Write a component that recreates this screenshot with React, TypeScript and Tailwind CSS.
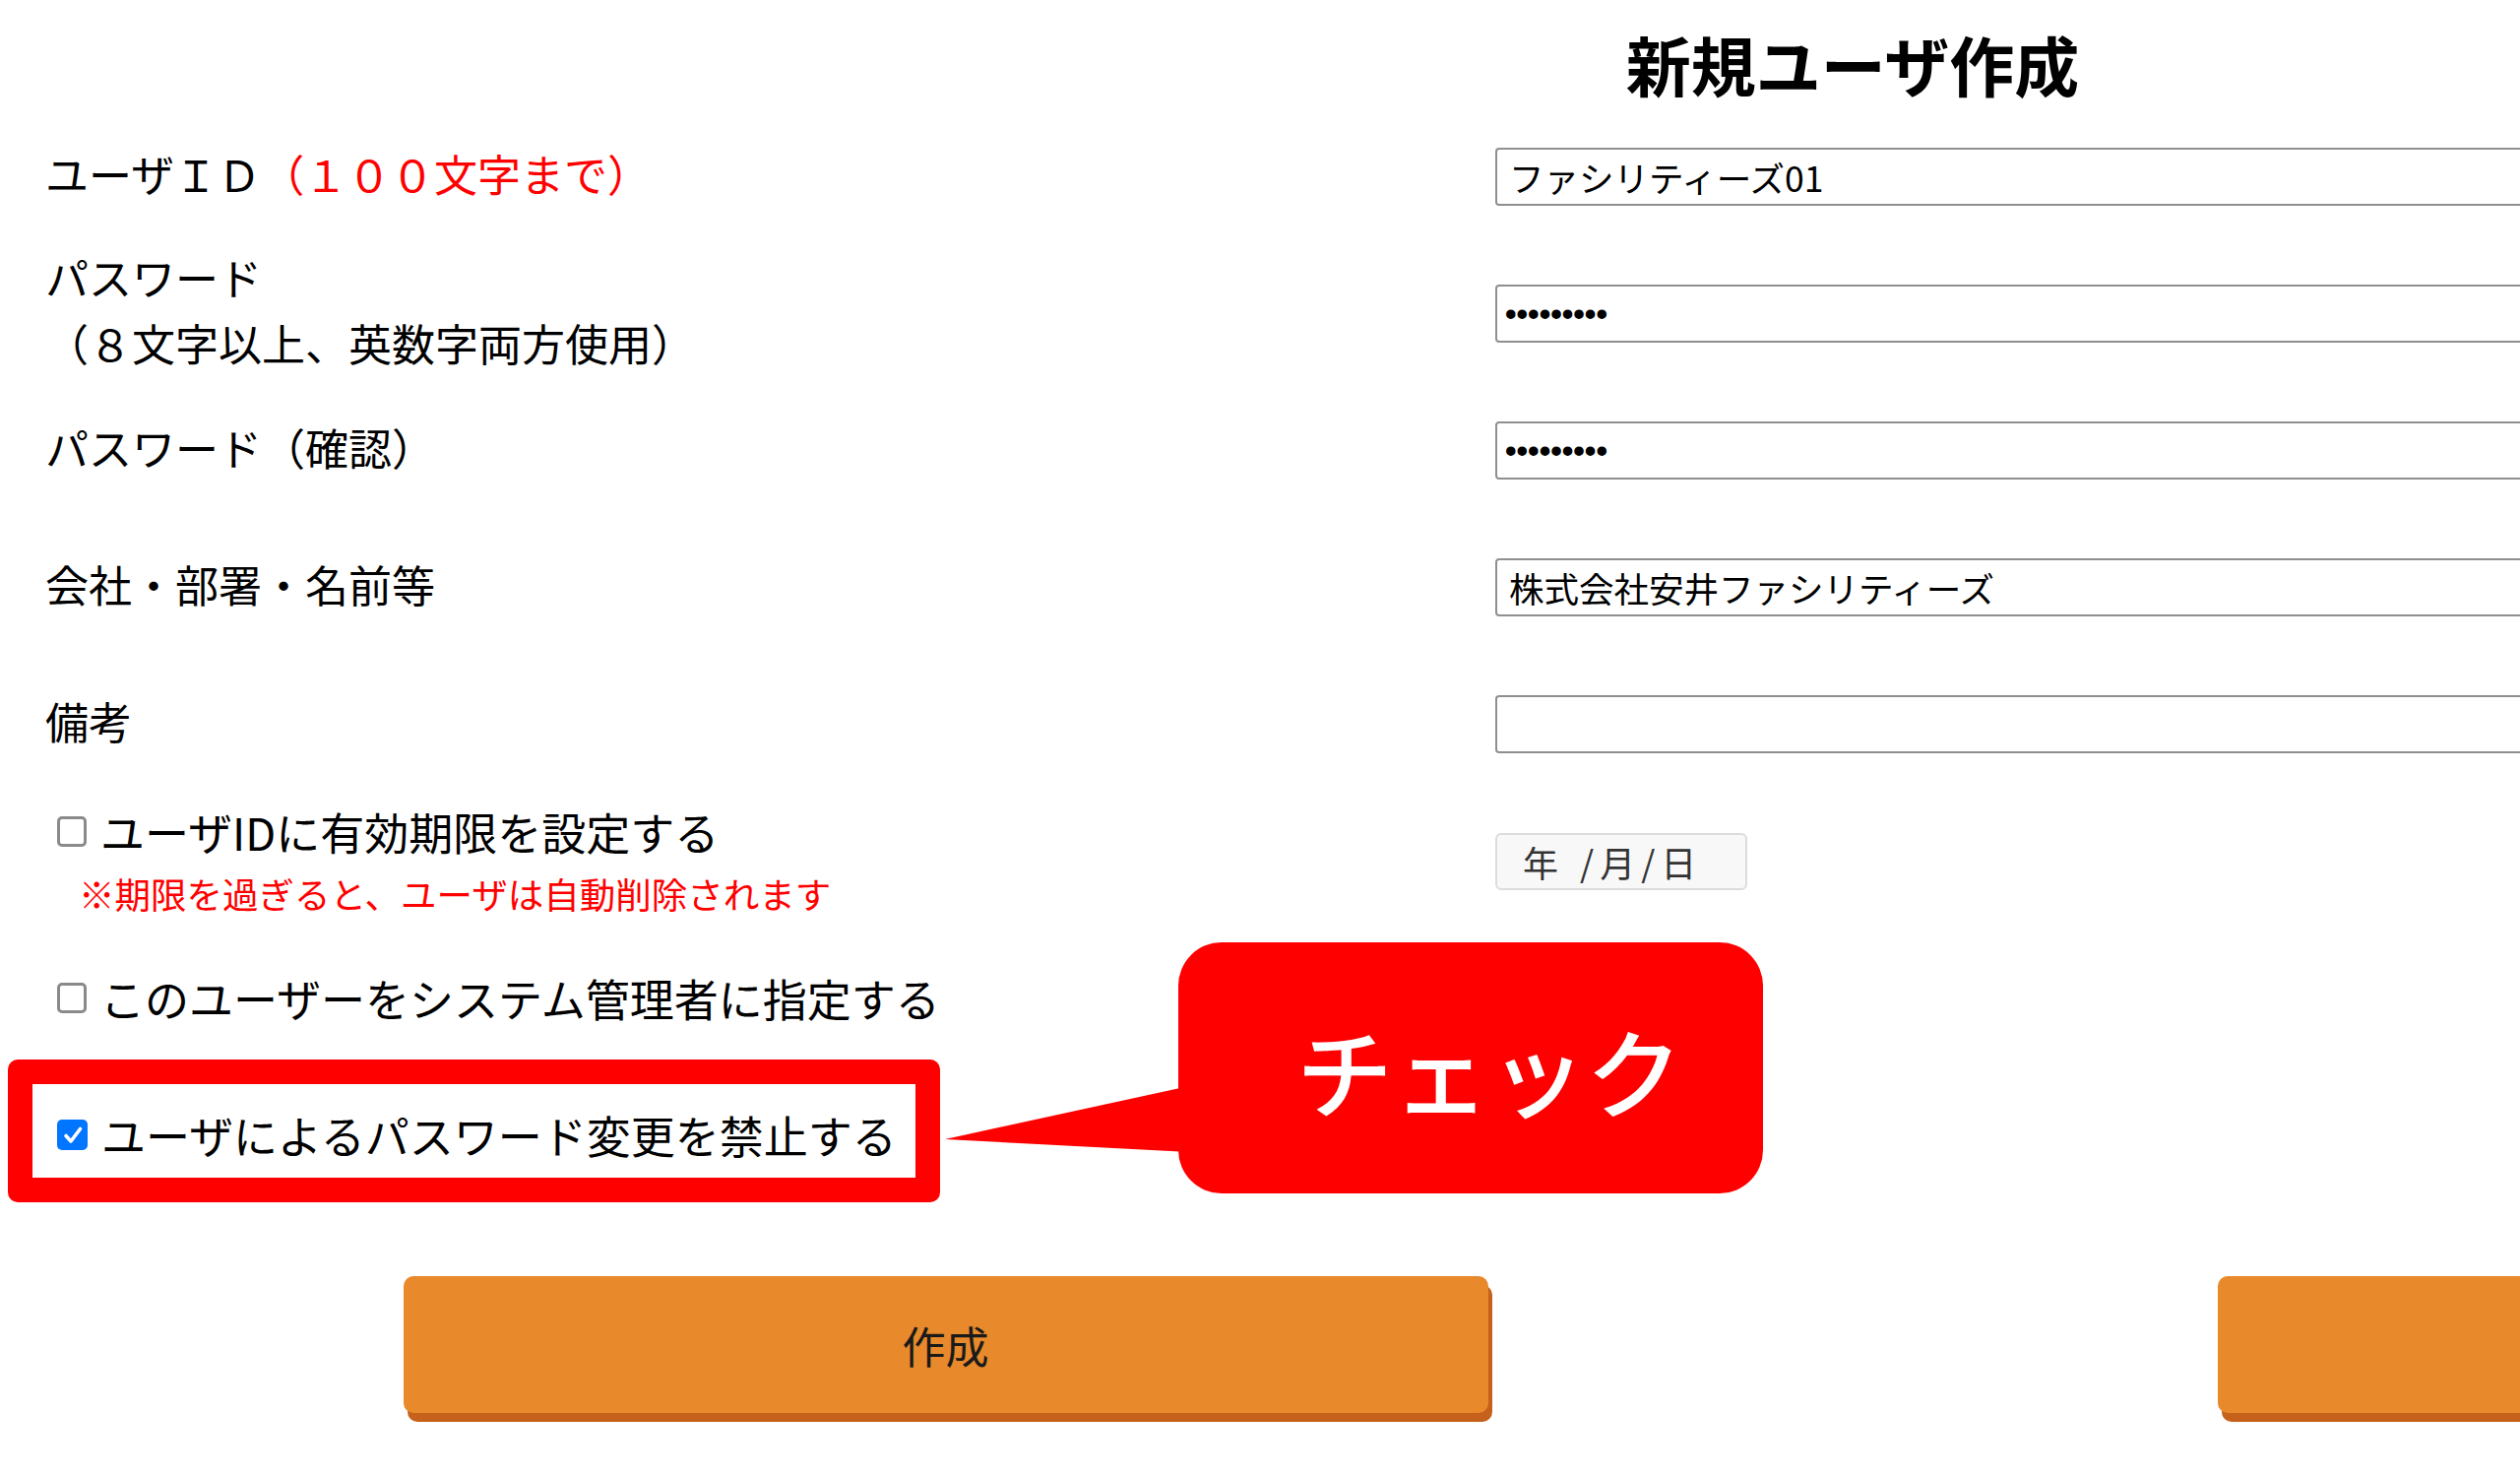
import React from "react";

function Box({ checked }: { checked?: boolean }) {
  if (checked) {
    return (
      <span className="w-[31px] h-[31px] shrink-0 rounded-[5px] bg-[#0075ff] flex items-center justify-center">
        <svg width="24" height="24" viewBox="0 0 24 24">
          <path d="M5 12.5 L10 18 L19.5 5.5" fill="none" stroke="#ffffff" strokeWidth="3.6" strokeLinecap="round" strokeLinejoin="round" />
        </svg>
      </span>
    );
  }
  return <span className="w-[30px] h-[31px] shrink-0 rounded-[5px] border-[3px] border-[#8a8a8a] bg-white" />;
}

function TextInput({ value, type = "text" }: { value: string; type?: string }) {
  const pw = type === "password";
  return (
    <input
      type={type}
      value={value}
      readOnly
      className={
        "w-full h-[59px] border-2 border-[#8f8f8f] rounded-[4px] bg-white text-black outline-none " +
        (pw
          ? "pl-[8px] text-[33px] font-bold font-['Liberation_Sans',sans-serif]"
          : "pl-[12px] text-[35.5px] font-['Noto_Sans_CJK_JP',sans-serif]")
      }
    />
  );
}

export default function App() {
  return (
    <div className="w-[2560px] h-[1500px] overflow-hidden bg-white relative text-black font-['Noto_Sans_CJK_JP',sans-serif]">
      <div className="w-[3764px] px-[46px]">
        <h1 className="h-[110px] pt-[31px] text-center text-[66px] leading-none font-bold">新規ユーザ作成</h1>

        <div className="grid grid-cols-[1473px_1fr] auto-rows-[139px]">
          {/* Row 1 */}
          <div className="flex items-center pb-[8px] text-[44px] leading-none">
            <span>ユーザＩＤ</span>
            <span className="text-[#ff0000]">（１００文字まで）</span>
          </div>
          <div className="flex items-center">
            <TextInput value="ファシリティーズ01" />
          </div>

          {/* Row 2 */}
          <div className="flex flex-col justify-center pb-[8px] text-[44px] leading-[67px]">
            <span>パスワード</span>
            <span>（８文字以上、英数字両方使用）</span>
          </div>
          <div className="flex items-center">
            <TextInput type="password" value="abcdefgh1" />
          </div>

          {/* Row 3 */}
          <div className="flex items-center pb-[8px] text-[44px] leading-none">パスワード（確認）</div>
          <div className="flex items-center">
            <TextInput type="password" value="abcdefgh1" />
          </div>

          {/* Row 4 */}
          <div className="flex items-center pb-[8px] text-[44px] leading-none">会社・部署・名前等</div>
          <div className="flex items-center">
            <TextInput value="株式会社安井ファシリティーズ" />
          </div>

          {/* Row 5 */}
          <div className="flex items-center pb-[8px] text-[44px] leading-none">備考</div>
          <div className="flex items-center">
            <TextInput value="" />
          </div>

          {/* Row 6 */}
          <div className="flex flex-col justify-center pt-[6px]">
            <label className="flex items-center h-[60px] pl-[12px] gap-[14px] text-[45px] leading-none">
              <Box />
              <span>ユーザIDに有効期限を設定する</span>
            </label>
            <div className="pl-[34px] text-[36.5px] leading-[66px] text-[#ff0000]">※期限を過ぎると、ユーザは自動削除されます</div>
          </div>
          <div className="flex items-center">
            <div className="w-[256px] h-[58px] bg-[#f8f8f8] border-2 border-[#dcdcdc] rounded-[6px] flex items-center pl-[26px] text-[36px] leading-none text-[#333333]">
              <span>年</span>
              <span className="ml-[22px]">/</span>
              <span className="ml-[6px]">月</span>
              <span className="ml-[6px]">/</span>
              <span className="ml-[6px]">日</span>
            </div>
          </div>

          {/* Row 7 */}
          <label className="flex items-center pl-[12px] gap-[14px] text-[45px] leading-none">
            <Box />
            <span>このユーザーをシステム管理者に指定する</span>
          </label>
          <div />

          {/* Row 8 */}
          <label className="flex items-center pl-[12px] gap-[14px] text-[45px] leading-none">
            <Box checked />
            <span>ユーザによるパスワード変更を禁止する</span>
          </label>
          <div />
        </div>

        <div className="mt-[74px] flex justify-center gap-[741px]">
          <button className="w-[1102px] h-[139px] rounded-[10px] bg-[#e8892b] shadow-[4px_9px_0_#c5611b] text-[44px] leading-none text-[#1a1a1a]">
            作成
          </button>
          <button className="w-[1102px] h-[139px] rounded-[10px] bg-[#e8892b] shadow-[4px_9px_0_#c5611b]" aria-label="戻る" />
        </div>
      </div>

      {/* Annotation: red highlight box */}
      <div className="absolute left-[8px] top-[1076px] w-[947px] h-[145px] border-[25px] border-[#ff0000] rounded-[10px] pointer-events-none" />

      {/* Annotation: callout */}
      <svg className="absolute left-[958px] top-[1100px]" width="250" height="75" viewBox="0 0 250 75">
        <polygon points="2,57 250,3 250,70" fill="#ff0000" />
      </svg>
      <div className="absolute left-[1197px] top-[957px] w-[594px] h-[255px] rounded-[44px] bg-[#ff0000] flex items-center justify-center pl-[38px] text-white text-[98px] font-medium leading-none">
        チェック
      </div>
    </div>
  );
}
